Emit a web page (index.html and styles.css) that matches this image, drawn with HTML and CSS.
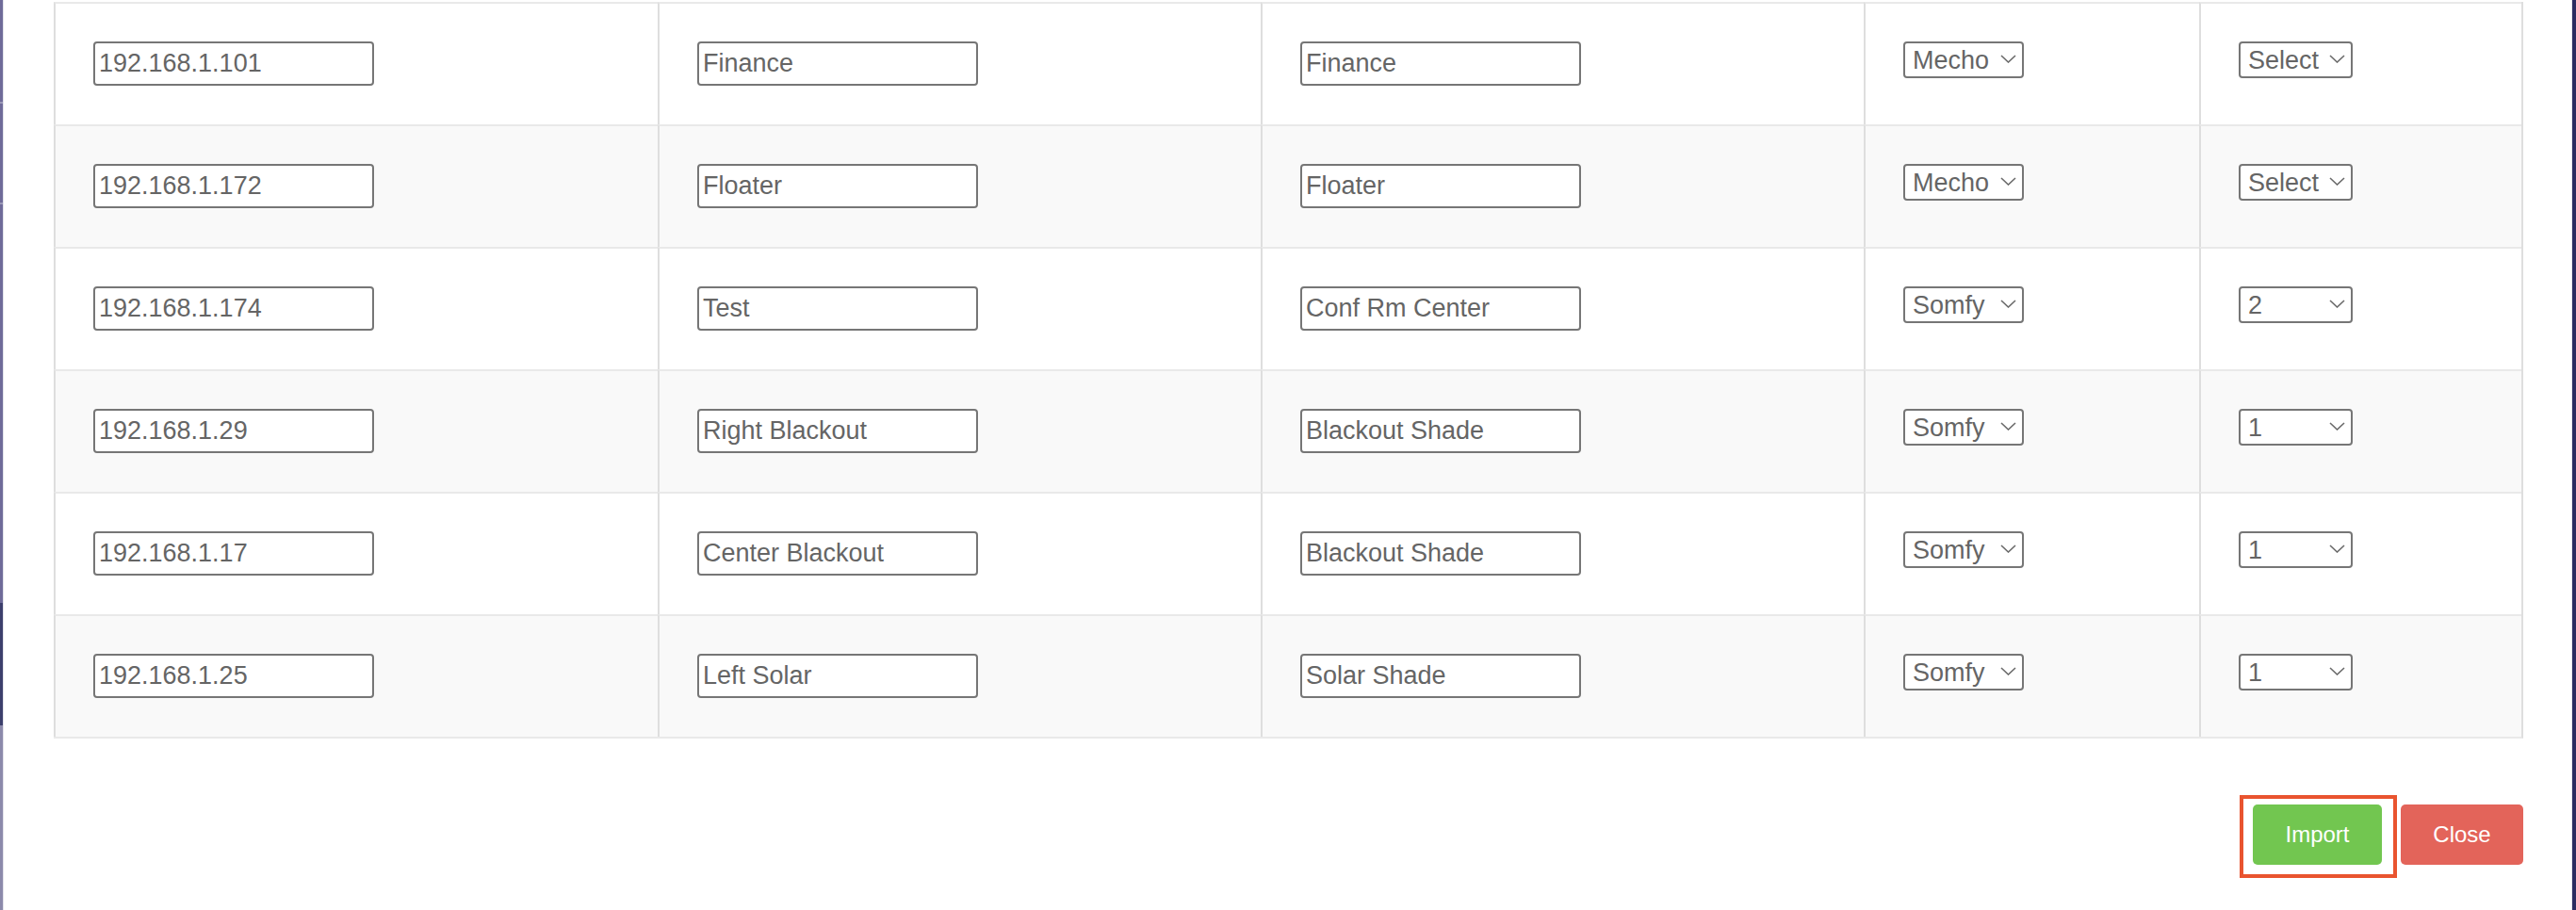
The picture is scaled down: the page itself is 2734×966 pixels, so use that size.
FILE: index.html
```html
<!DOCTYPE html>
<html lang="en">
<head>
<meta charset="utf-8">
<title>Import Devices</title>
<link rel="stylesheet" href="styles.css">
</head>
<body>
<div class="screen">
  <div class="backdrop-left"></div>
  <div class="modal">
    <table class="devices">
      <colgroup>
        <col class="c-ip"><col class="c-name"><col class="c-group"><col class="c-brand"><col class="c-ch">
      </colgroup>
      <tbody>
        <tr>
          <td><input class="field" type="text" value="192.168.1.101"></td>
          <td><input class="field" type="text" value="Finance"></td>
          <td><input class="field" type="text" value="Finance"></td>
          <td><span class="select-wrap brand"><select class="select"><option selected>Mecho</option><option>Somfy</option></select><svg class="chev" width="17" height="9" viewBox="0 0 17 9"><polyline points="1,1 8.5,8 16,1"/></svg></span></td>
          <td><span class="select-wrap channel"><select class="select"><option selected>Select</option><option>1</option><option>2</option></select><svg class="chev" width="17" height="9" viewBox="0 0 17 9"><polyline points="1,1 8.5,8 16,1"/></svg></span></td>
        </tr>
        <tr>
          <td><input class="field" type="text" value="192.168.1.172"></td>
          <td><input class="field" type="text" value="Floater"></td>
          <td><input class="field" type="text" value="Floater"></td>
          <td><span class="select-wrap brand"><select class="select"><option selected>Mecho</option><option>Somfy</option></select><svg class="chev" width="17" height="9" viewBox="0 0 17 9"><polyline points="1,1 8.5,8 16,1"/></svg></span></td>
          <td><span class="select-wrap channel"><select class="select"><option selected>Select</option><option>1</option><option>2</option></select><svg class="chev" width="17" height="9" viewBox="0 0 17 9"><polyline points="1,1 8.5,8 16,1"/></svg></span></td>
        </tr>
        <tr>
          <td><input class="field" type="text" value="192.168.1.174"></td>
          <td><input class="field" type="text" value="Test"></td>
          <td><input class="field" type="text" value="Conf Rm Center"></td>
          <td><span class="select-wrap brand"><select class="select"><option>Mecho</option><option selected>Somfy</option></select><svg class="chev" width="17" height="9" viewBox="0 0 17 9"><polyline points="1,1 8.5,8 16,1"/></svg></span></td>
          <td><span class="select-wrap channel"><select class="select"><option>Select</option><option>1</option><option selected>2</option></select><svg class="chev" width="17" height="9" viewBox="0 0 17 9"><polyline points="1,1 8.5,8 16,1"/></svg></span></td>
        </tr>
        <tr>
          <td><input class="field" type="text" value="192.168.1.29"></td>
          <td><input class="field" type="text" value="Right Blackout"></td>
          <td><input class="field" type="text" value="Blackout Shade"></td>
          <td><span class="select-wrap brand"><select class="select"><option>Mecho</option><option selected>Somfy</option></select><svg class="chev" width="17" height="9" viewBox="0 0 17 9"><polyline points="1,1 8.5,8 16,1"/></svg></span></td>
          <td><span class="select-wrap channel"><select class="select"><option>Select</option><option selected>1</option><option>2</option></select><svg class="chev" width="17" height="9" viewBox="0 0 17 9"><polyline points="1,1 8.5,8 16,1"/></svg></span></td>
        </tr>
        <tr>
          <td><input class="field" type="text" value="192.168.1.17"></td>
          <td><input class="field" type="text" value="Center Blackout"></td>
          <td><input class="field" type="text" value="Blackout Shade"></td>
          <td><span class="select-wrap brand"><select class="select"><option>Mecho</option><option selected>Somfy</option></select><svg class="chev" width="17" height="9" viewBox="0 0 17 9"><polyline points="1,1 8.5,8 16,1"/></svg></span></td>
          <td><span class="select-wrap channel"><select class="select"><option>Select</option><option selected>1</option><option>2</option></select><svg class="chev" width="17" height="9" viewBox="0 0 17 9"><polyline points="1,1 8.5,8 16,1"/></svg></span></td>
        </tr>
        <tr>
          <td><input class="field" type="text" value="192.168.1.25"></td>
          <td><input class="field" type="text" value="Left Solar"></td>
          <td><input class="field" type="text" value="Solar Shade"></td>
          <td><span class="select-wrap brand"><select class="select"><option>Mecho</option><option selected>Somfy</option></select><svg class="chev" width="17" height="9" viewBox="0 0 17 9"><polyline points="1,1 8.5,8 16,1"/></svg></span></td>
          <td><span class="select-wrap channel"><select class="select"><option>Select</option><option selected>1</option><option>2</option></select><svg class="chev" width="17" height="9" viewBox="0 0 17 9"><polyline points="1,1 8.5,8 16,1"/></svg></span></td>
        </tr>
      </tbody>
    </table>
    <div class="modal-footer">
      <span class="focus-mark"><button class="btn btn-import" type="button">Import</button></span>
      <button class="btn btn-close" type="button">Close</button>
    </div>
  </div>
  <div class="backdrop-right"></div>
</div>
</body>
</html>
```

FILE: styles.css
```css
html, body {
  margin: 0;
  padding: 0;
  height: 966px;
  overflow: hidden;
  background: #ffffff;
  font-family: "Liberation Sans", Arial, sans-serif;
}

.screen {
  display: flex;
  height: 966px;
}

.backdrop-left {
  width: 3px;
  flex: none;
  background: linear-gradient(to bottom,
    #6f6b99 0px, #6f6b99 108px, #9a98b8 108px, #9a98b8 110px,
    #6f6b99 110px, #6f6b99 215px, #9a98b8 215px, #9a98b8 217px,
    #6f6b99 217px, #6f6b99 640px, #3c3f6c 640px, #3c3f6c 770px,
    #8c8aab 770px, #8c8aab 966px);
}

.backdrop-right {
  width: 4px;
  flex: none;
  background: #2b2c61;
}

.modal {
  flex: 1;
  background: #ffffff;
  border-left: 1px solid #e2e2ea;
  border-right: 1px solid #e6e6ec;
  padding: 2px 51px 0 53px;
}

.devices {
  border-collapse: separate;
  border-spacing: 0;
  table-layout: fixed;
  width: 2621px;
  border-right: 2px solid #dedede;
  border-bottom: 2px solid #e9e9e9;
}

.c-ip { width: 641px; }
.c-name { width: 640px; }
.c-group { width: 640px; }
.c-brand { width: 356px; }
.c-ch { width: 342px; }

.devices td {
  box-sizing: border-box;
  border-top: 2px solid #e9e9e9;
  border-left: 2px solid #dedede;
  padding: 40px 0 41px 40px;
  vertical-align: top;
  background: #ffffff;
}

.devices tr:nth-child(even) td {
  background: #f9f9f9;
}

.field {
  display: block;
  box-sizing: border-box;
  width: 298px;
  height: 47px;
  margin: 0;
  padding: 0 4px;
  border: 2px solid #767676;
  border-radius: 4px;
  background: #ffffff;
  font-family: "Liberation Sans", Arial, sans-serif;
  font-size: 27px;
  color: #656565;
  outline: none;
}

.select-wrap {
  position: relative;
  display: block;
}

.select-wrap.brand { width: 128px; }
.select-wrap.channel { width: 121px; }

.select {
  display: block;
  box-sizing: border-box;
  width: 100%;
  height: 39px;
  margin: 0;
  padding: 0 0 0 8px;
  border: 2px solid #767676;
  border-radius: 4px;
  background: #ffffff;
  -webkit-appearance: none;
  appearance: none;
  font-family: "Liberation Sans", Arial, sans-serif;
  font-size: 27px;
  color: #656565;
  outline: none;
}

.chev {
  position: absolute;
  right: 8px;
  top: 14px;
  pointer-events: none;
}

.chev polyline {
  fill: none;
  stroke: #6a6a6a;
  stroke-width: 1.6;
}

.modal-footer {
  display: flex;
  justify-content: flex-end;
  gap: 20px;
  margin-top: 70px;
}

.focus-mark {
  position: relative;
  display: block;
}

.focus-mark::after {
  content: "";
  position: absolute;
  top: -10px;
  left: -14px;
  right: -16px;
  bottom: -14px;
  border: 4px solid #e9542f;
  pointer-events: none;
}

.btn {
  display: block;
  height: 64px;
  border: none;
  border-radius: 5px;
  color: #ffffff;
  font-family: "Liberation Sans", Arial, sans-serif;
  font-size: 24px;
  padding: 0;
  cursor: pointer;
}

.btn-import {
  width: 137px;
  background: #72c650;
}

.btn-close {
  width: 130px;
  background: #e3645a;
}
```
